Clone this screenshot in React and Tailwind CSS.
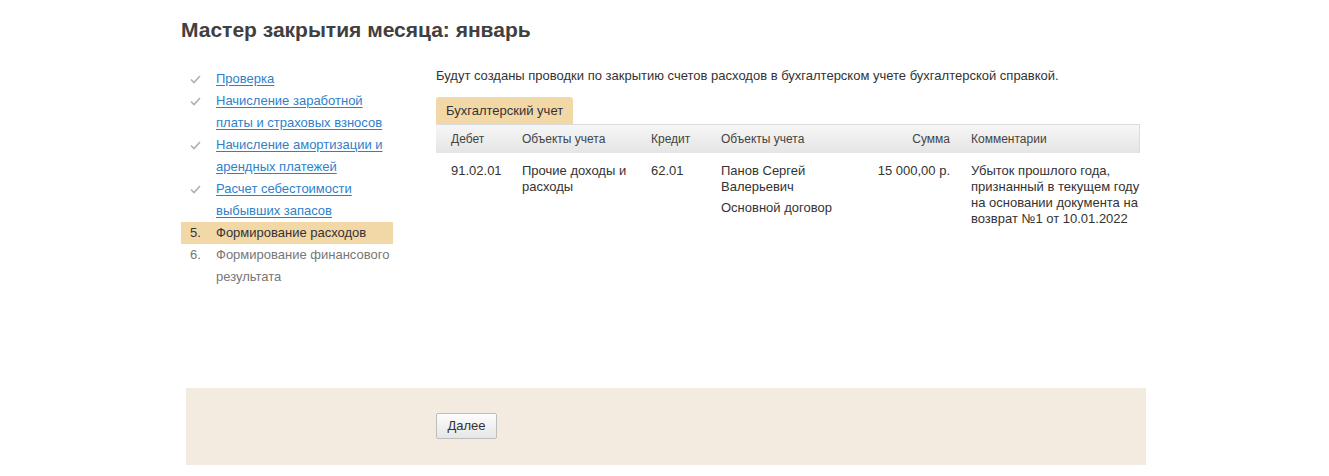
import React from 'react';

const Check = () => (
  <svg width="11" height="9" viewBox="0 0 11 9" className="mt-[7px]">
    <path d="M1 4.5 L4 7.5 L10 1" fill="none" stroke="#b0b0b0" strokeWidth="1.6" />
  </svg>
);

const steps = [
  { done: true, text: 'Проверка' },
  { done: true, text: 'Начисление заработной платы и страховых взносов' },
  { done: true, text: 'Начисление амортизации и арендных платежей' },
  { done: true, text: 'Расчет себестоимости выбывших запасов' },
  { num: '5.', text: 'Формирование расходов', active: true },
  { num: '6.', text: 'Формирование финансового результата' },
];

const cols = 'grid grid-cols-[71px_129px_70px_154px_96px_1fr]';

const App = () => (
  <div className="min-h-[476px] bg-white pl-[181px] text-[13px] leading-[16px] text-[#333]" style={{ fontFamily: '"Liberation Sans", Arial, sans-serif' }}>
    <h1 className="pt-[18px] text-[21px] font-bold leading-[24px] text-[#404040]">Мастер закрытия месяца: январь</h1>

    <div className="mt-[26px] flex h-[320px]">
      <ul className="w-[212px]">
        {steps.map((s) => (
          <li key={s.text} className={`flex leading-[22px] ${s.active ? 'bg-[#f2d8a7]' : ''}`}>
            <div className="w-[35px] shrink-0 pl-[9px]">
              {s.done ? <Check /> : <span className={s.active ? 'text-[#333]' : 'text-[#777]'}>{s.num}</span>}
            </div>
            {s.done ? (
              <a href="#" className="text-[#2f7fcb] underline underline-offset-2">{s.text}</a>
            ) : (
              <span className={s.active ? 'text-[#333]' : 'text-[#777]'}>{s.text}</span>
            )}
          </li>
        ))}
      </ul>

      <div className="ml-[43px] w-[704px]">
        <p>Будут созданы проводки по закрытию счетов расходов в бухгалтерском учете бухгалтерской справкой.</p>
        <div className="mt-[13px] inline-block h-[27px] rounded-t-[3px] bg-[#f2d8a7] px-[10px] leading-[27px] text-[#333]">Бухгалтерский учет</div>
        <div className={`${cols} h-[29px] items-center border-t border-r border-[#dcdcdc] bg-gradient-to-b from-[#f6f6f6] to-[#e5e5e5] text-[12px] text-[#444]`}>
          <div className="pl-[15px]">Дебет</div>
          <div className="pl-[15px]">Объекты учета</div>
          <div className="pl-[15px]">Кредит</div>
          <div className="pl-[15px]">Объекты учета</div>
          <div className="pr-[6px] text-right">Сумма</div>
          <div className="pl-[15px]">Комментарии</div>
        </div>
        <div className={`${cols} pt-[10px]`}>
          <div className="pl-[15px]">91.02.01</div>
          <div className="pl-[15px] pr-2">Прочие доходы и расходы</div>
          <div className="pl-[15px]">62.01</div>
          <div className="pl-[15px] pr-2">
            <div>Панов Сергей Валерьевич</div>
            <div className="mt-[5px]">Основной договор</div>
          </div>
          <div className="pr-[6px] text-right">15 000,00 р.</div>
          <div className="pl-[15px]">Убыток прошлого года, признанный в текущем году на основании документа на возврат №1 от 10.01.2022</div>
        </div>
      </div>
    </div>

    <div className="ml-[5px] w-[960px] bg-[#f3ebdf] pt-[25px] pb-[26px] pl-[250px]">
      <button className="h-[26px] w-[61px] rounded-[2px] border border-[#bdbdbd] bg-gradient-to-b from-[#fdfdfd] to-[#e6e6e6] text-[13px] text-[#333]">Далее</button>
    </div>
  </div>
);

export default App;
